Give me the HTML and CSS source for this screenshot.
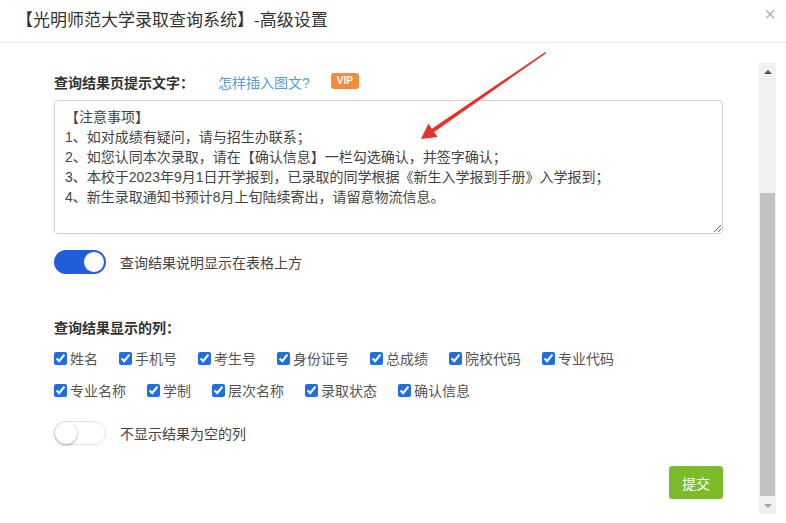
FILE: index.html
```html
<!DOCTYPE html>
<html lang="zh-CN">
<head>
    <meta charset="UTF-8">
    <title>高级设置</title>
    <link rel="stylesheet" href="styles.css">
</head>
<body>

<div class="dialog">
    <div class="dialog-header">
        <span class="dialog-title">【光明师范大学录取查询系统】-高级设置</span>
        <span class="dialog-close">&times;</span>
    </div>

    <div class="dialog-body">
        <div class="settings">
            <div class="field-label">
                <span class="label-text">查询结果页提示文字：</span>
                <a class="help-link" href="#">怎样插入图文?</a>
                <span class="vip-badge">VIP</span>
            </div>
            <textarea class="notice-text">【注意事项】
1、如对成绩有疑问，请与招生办联系；
2、如您认同本次录取，请在【确认信息】一栏勾选确认，并签字确认；
3、本校于2023年9月1日开学报到，已录取的同学根据《新生入学报到手册》入学报到；
4、新生录取通知书预计8月上旬陆续寄出，请留意物流信息。</textarea>

            <div class="switch-row first-switch">
                <span class="switch on"><span class="knob"></span></span>
                <span class="switch-text">查询结果说明显示在表格上方</span>
            </div>

            <div class="section-label">查询结果显示的列：</div>
            <div class="check-row">
                <label class="check"><input type="checkbox" checked>姓名</label>
                <label class="check"><input type="checkbox" checked>手机号</label>
                <label class="check"><input type="checkbox" checked>考生号</label>
                <label class="check"><input type="checkbox" checked>身份证号</label>
                <label class="check"><input type="checkbox" checked>总成绩</label>
                <label class="check"><input type="checkbox" checked>院校代码</label>
                <label class="check"><input type="checkbox" checked>专业代码</label>
            </div>
            <div class="check-row second">
                <label class="check"><input type="checkbox" checked>专业名称</label>
                <label class="check"><input type="checkbox" checked>学制</label>
                <label class="check"><input type="checkbox" checked>层次名称</label>
                <label class="check"><input type="checkbox" checked>录取状态</label>
                <label class="check"><input type="checkbox" checked>确认信息</label>
            </div>

            <div class="switch-row last-switch">
                <span class="switch off"><span class="knob"></span></span>
                <span class="switch-text">不显示结果为空的列</span>
            </div>

            <div class="actions">
                <button class="submit-btn">提交</button>
            </div>
        </div>

        <div class="scrollbar">
            <div class="scroll-btn up"></div>
            <div class="scroll-track"><div class="scroll-thumb"></div></div>
            <div class="scroll-btn down"></div>
        </div>
    </div>

    <!-- red annotation arrow -->
    <svg class="annotation" width="786" height="523" viewBox="0 0 786 523">
        <polygon points="421,139 437.6,137 434.1,132 546.2,53.2 545.3,51.9 431.9,128.8 428.4,123.8" fill="#e8302c"/>
    </svg>
</div>

</body>
</html>
```

FILE: styles.css
```css
body {
    margin: 0;
    background: #fff;
    font-family: "Liberation Sans", "Noto Sans CJK SC", sans-serif;
    font-size: 14px;
    color: #333;
}
.dialog {
    position: relative;
    width: 786px;
    height: 523px;
    overflow: hidden;
}
.dialog-header {
    height: 43px;
    border-bottom: 1px solid #e6e6e6;
    display: flex;
    align-items: center;
    justify-content: space-between;
    padding: 0 10px 6px 16px;
    box-sizing: border-box;
}
.dialog-title {
    font-size: 17px;
    color: #333;
}
.dialog-close {
    font-size: 20px;
    color: #b5b5b5;
    margin-top: -8px;
}
.dialog-body {
    display: flex;
}
.settings {
    width: 669px;
    padding: 29px 0 0 54px;
}
.field-label {
    display: flex;
    align-items: center;
    height: 20px;
}
.label-text {
    font-weight: bold;
    width: 164px;
}
.help-link {
    color: #5a9bd8;
    text-decoration: none;
}
.vip-badge {
    margin-left: 21px;
    background: #f58a3c;
    color: #fff;
    font-size: 10px;
    font-weight: bold;
    padding: 2px 6px;
    border-radius: 3px;
    line-height: 12px;
    margin-top: -2px;
}
.notice-text {
    display: block;
    margin-top: 8px;
    width: 669px;
    height: 134px;
    box-sizing: border-box;
    border: 1px solid #d2d2d2;
    border-radius: 4px;
    padding: 6px 10px;
    font-family: "Liberation Sans", "Noto Sans CJK SC", sans-serif;
    font-size: 14px;
    line-height: 20px;
    color: #444;
    resize: vertical;
}
.switch-row {
    display: flex;
    align-items: center;
}
.first-switch {
    margin-top: 16px;
}
.last-switch {
    margin-top: 21px;
}
.switch {
    position: relative;
    width: 52px;
    height: 24px;
    border-radius: 12px;
    box-sizing: border-box;
    margin-right: 14px;
}
.switch.on {
    background: #1f5ddb;
}
.switch.off {
    background: #fff;
    border: 1px solid #e3e3e3;
}
.knob {
    position: absolute;
    top: 1px;
    width: 22px;
    height: 22px;
    border-radius: 50%;
    background: #fff;
    box-sizing: border-box;
}
.switch.on .knob {
    right: 1px;
    border: 1px solid #1f5ddb;
}
.switch.off .knob {
    left: 0;
    top: 0;
    box-shadow: 0 1px 3px rgba(0, 0, 0, 0.35);
}
.switch-text {
    color: #444;
}
.section-label {
    font-weight: bold;
    margin-top: 44px;
    height: 20px;
    line-height: 20px;
}
.check-row {
    display: flex;
    margin-top: 10px;
    height: 20px;
    align-items: center;
}
.check-row.second {
    margin-top: 12px;
}
.check {
    display: flex;
    align-items: center;
    margin-right: 21px;
    color: #555;
}
.check input {
    margin: 0 3px 0 0;
    width: 13px;
    height: 13px;
    accent-color: #1f6fe0;
}
.actions {
    display: flex;
    justify-content: flex-end;
    margin-top: 21px;
}
.submit-btn {
    width: 54px;
    height: 33px;
    border: none;
    border-radius: 3px;
    background: #7cbc2a;
    color: #fff;
    font-family: "Liberation Sans", "Noto Sans CJK SC", sans-serif;
    font-size: 14px;
}
.scrollbar {
    margin: 20px 0 0 36px;
    width: 17px;
    height: 451px;
    background: #f1f1f1;
    display: flex;
    flex-direction: column;
}
.scroll-btn {
    height: 17px;
    display: flex;
    align-items: center;
    justify-content: center;
}
.scroll-btn.up::after {
    content: "";
    border: 4px solid transparent;
    border-bottom: 4px solid #505050;
    border-top: none;
}
.scroll-btn.down::after {
    content: "";
    border: 4px solid transparent;
    border-top: 4px solid #a3a3a3;
    border-bottom: none;
}
.scroll-track {
    flex: 1;
    padding-top: 113px;
}
.scroll-thumb {
    margin: 0 1px;
    height: 303px;
    background: #c1c1c1;
}
.annotation {
    position: absolute;
    left: 0;
    top: 0;
    pointer-events: none;
}
```
